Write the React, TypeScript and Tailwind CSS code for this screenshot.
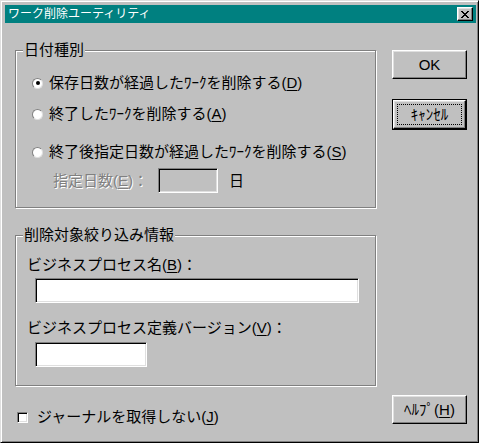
const raised =
  "border border-t-white border-l-white border-r-black border-b-black shadow-[inset_-1px_-1px_0_#808080,inset_1px_1px_0_#dfdfdf]";
const sunken =
  "border border-t-[#808080] border-l-[#808080] border-r-white border-b-white shadow-[inset_1px_1px_0_#000,inset_-1px_-1px_0_#dfdfdf]";

function Key({ k }: { k: string }) {
  return <span className="underline underline-offset-[2px]">{k}</span>;
}

function Radio({ checked }: { checked?: boolean }) {
  return (
    <span className="flex h-[11px] w-[11px] shrink-0 items-center justify-center rounded-full border border-t-[#808080] border-l-[#808080] border-r-[#dfdfdf] border-b-[#dfdfdf] bg-white">
      {checked && <span className="h-[4px] w-[4px] rounded-full bg-black" />}
    </span>
  );
}

function GroupBox({
  title,
  className,
  children,
}: {
  title: string;
  className: string;
  children: React.ReactNode;
}) {
  return (
    <div
      className={`relative border border-[#808080] shadow-[inset_1px_1px_0_#fff,1px_1px_0_#fff] ${className}`}
    >
      <span className="absolute left-[7px] top-[-11px] bg-[#c0c0c0] px-[1px] text-[15px] leading-[20px]">
        {title}
      </span>
      {children}
    </div>
  );
}

export default function App() {
  return (
    <div className="h-[447px] w-[484px] bg-white font-['Liberation_Sans','Noto_Sans_CJK_JP',sans-serif] text-black">
      <div className="flex h-[443px] w-[479px] flex-col border border-t-[#dfdfdf] border-l-[#dfdfdf] border-r-black border-b-black bg-[#c0c0c0] pl-[4px] pr-[2px] pt-[4px] shadow-[inset_1px_1px_0_#fff,inset_-1px_-1px_0_#808080]">
        {/* title bar */}
        <div className="flex h-[18px] shrink-0 items-center justify-between bg-[#008080] pl-[3px] pr-[3px]">
          <span className="text-[12px] leading-[18px] text-white">
            ワーク削除ユーティリティ
          </span>
          <span
            className={`flex h-[14px] w-[16px] items-center justify-center bg-[#c0c0c0] ${raised}`}
          >
            <svg width="8" height="7" viewBox="0 0 8 7">
              <path
                d="M0 0h2v1h1v1h2V1h1V0h2v1H7v1H6v1H5v1h1v1h1v1h1v1H6V6H5V5H3v1H2v1H0V6h1V5h1V4h1V3H2V2H1V1H0z"
                fill="#000"
              />
            </svg>
          </span>
        </div>

        <div className="flex flex-1 pl-[10px]">
          {/* left column */}
          <div className="flex w-[361px] flex-col text-[15px] leading-[20px]">
            <GroupBox title="日付種別" className="mt-[27px] h-[158px] pl-[16px] pt-[22px]">
              <div className="flex h-[20px] items-center gap-[6px]">
                <Radio checked />
                <span>
                  保存日数が経過したﾜｰｸを削除する(<Key k="D" />)
                </span>
              </div>
              <div className="mt-[11px] flex h-[20px] items-center gap-[6px]">
                <Radio />
                <span>
                  終了したﾜｰｸを削除する(<Key k="A" />)
                </span>
              </div>
              <div className="mt-[18px] flex h-[20px] items-center gap-[6px]">
                <Radio />
                <span>
                  終了後指定日数が経過したﾜｰｸを削除する(<Key k="S" />)
                </span>
              </div>
              <div className="ml-[21px] mt-[6px] flex h-[25px] items-center">
                <span className="w-[105px] text-[#808080] [text-shadow:1px_1px_0_#fff]">
                  指定日数(<Key k="E" />)：
                </span>
                <span className={`h-[25px] w-[60px] bg-[#c0c0c0] ${sunken}`} />
                <span className="ml-[11px]">日</span>
              </div>
            </GroupBox>

            <GroupBox
              title="削除対象絞り込み情報"
              className="mt-[27px] h-[151px] pl-[11px] pt-[19px]"
            >
              <div className="h-[20px]">
                ビジネスプロセス名(<Key k="B" />)：
              </div>
              <div className={`ml-[8px] mt-[3px] h-[25px] w-[324px] bg-white ${sunken}`} />
              <div className="mt-[15px] h-[20px]">
                ビジネスプロセス定義バージョン(<Key k="V" />)：
              </div>
              <div className={`ml-[8px] mt-[4px] h-[25px] w-[112px] bg-white ${sunken}`} />
            </GroupBox>

            <div className="ml-[2px] mt-[21px] flex h-[20px] items-center gap-[9px]">
              <span className={`h-[11px] w-[11px] shrink-0 bg-white ${sunken}`} />
              <span>
                ジャーナルを取得しない(<Key k="J" />)
              </span>
            </div>
          </div>

          {/* right column */}
          <div className="ml-[16px] flex flex-col pb-[18px] pt-[27px] text-[15px] leading-[20px]">
            <button
              className={`flex h-[29px] w-[75px] items-center justify-center bg-[#c0c0c0] ${raised}`}
            >
              OK
            </button>
            <button className="relative mt-[20px] flex h-[31px] w-[75px] items-center justify-center border border-black bg-[#c0c0c0]">
              <span
                className={`flex h-full w-full items-center justify-center ${raised}`}
              >
                ｷｬﾝｾﾙ
              </span>
              <span className="absolute inset-[4px] border border-dotted border-black" />
            </button>
            <button
              className={`mt-auto flex h-[29px] w-[75px] items-center justify-center bg-[#c0c0c0] ${raised}`}
            >
              ﾍﾙﾌﾟ(<Key k="H" />)
            </button>
          </div>
        </div>
      </div>
    </div>
  );
}
